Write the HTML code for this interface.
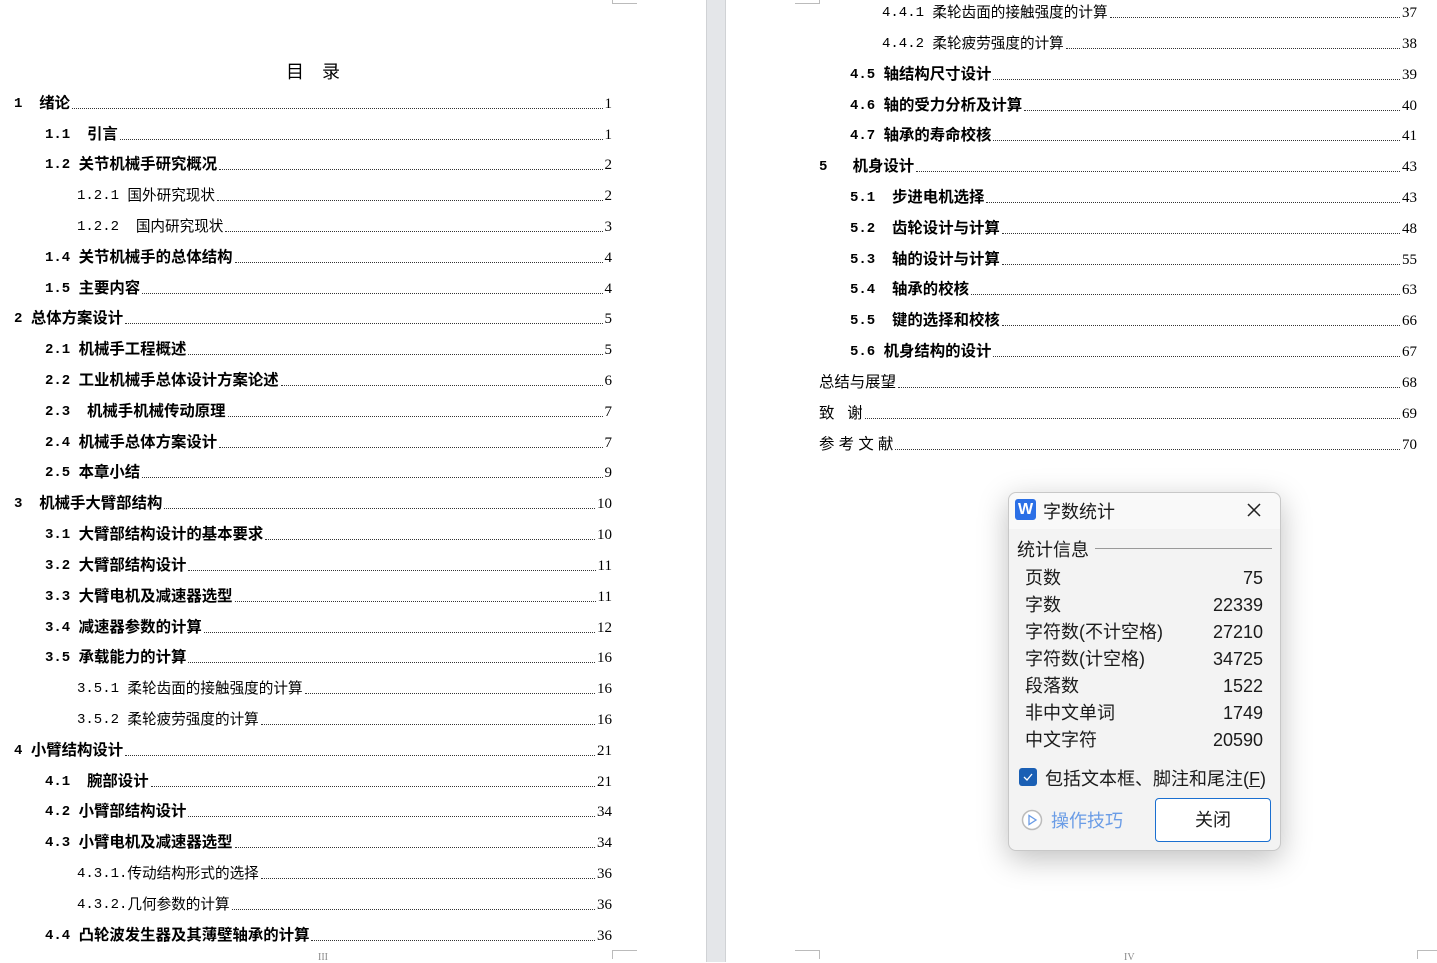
<!DOCTYPE html><html><head><meta charset="utf-8"><style>
body{margin:0;width:1437px;height:962px;overflow:hidden;background:#fff;position:relative;font-family:"Liberation Sans","Noto Sans CJK SC",sans-serif;color:#000}
.gap{position:absolute;left:706px;top:0;width:20px;height:962px;background:#e4e6e9;border-left:1px solid #d0d2d5;border-right:1px solid #d0d2d5;box-sizing:border-box}
.r{position:absolute;height:20px;display:flex;align-items:flex-end;font-size:15.4px;line-height:20px;white-space:pre}
.r.b{font-weight:bold}
.r .d{flex:1;border-bottom:1px dotted #333;margin:0 2px 5px 2px;min-width:4px}
.r .n{font-family:"Liberation Serif",serif;font-weight:normal;font-size:15px}
.r.s{font-size:14.6px}
.m{font-family:"Liberation Mono",monospace;font-size:14px}
.cm{position:absolute;border-color:#bbb;border-style:solid;width:24px;height:8px}
.dlg{position:absolute;left:1008px;top:492px;width:271px;height:357px;background:#f3f3f3;border:1px solid #c8c8c8;border-radius:8px;box-shadow:0 8px 30px rgba(0,0,0,.25);font-family:"Liberation Sans","Noto Sans CJK SC",sans-serif;font-size:18px;color:#1a1a1a}
.dlg .row{position:absolute;left:16px;width:238px;display:flex;justify-content:space-between;line-height:24px}
</style></head><body>
<div class="gap"></div>
<div class="cm" style="left:612px;top:-5px;border-width:0 0 1px 1px;width:24px"></div>
<div class="cm" style="left:795px;top:-5px;border-width:0 1px 1px 0"></div>
<div class="cm" style="left:612px;top:950px;border-width:1px 0 0 1px"></div>
<div class="cm" style="left:795px;top:950px;border-width:1px 1px 0 0"></div>
<div class="cm" style="left:1417px;top:950px;border-width:1px 0 0 1px"></div>
<div style="position:absolute;left:286px;top:58px;font-size:18px;word-spacing:0">目<span style="display:inline-block;width:18px"></span>录</div>
<div style="position:absolute;left:318px;top:952px;font-size:10px;color:#888;font-family:'Liberation Serif',serif">III</div>
<div style="position:absolute;left:1124px;top:952px;font-size:10px;color:#888;font-family:'Liberation Serif',serif">IV</div>

<div class="r b" style="left:14px;top:94px;width:598px"><span class="m">1  </span>绪论<span class="d"></span><span class="n">1</span></div>
<div class="r b" style="left:45px;top:125px;width:567px"><span class="m">1.1  </span>引言<span class="d"></span><span class="n">1</span></div>
<div class="r b" style="left:45px;top:155px;width:567px"><span class="m">1.2 </span>关节机械手研究概况<span class="d"></span><span class="n">2</span></div>
<div class="r s" style="left:77px;top:186px;width:535px"><span class="m">1.2.1 </span>国外研究现状<span class="d"></span><span class="n">2</span></div>
<div class="r s" style="left:77px;top:217px;width:535px"><span class="m">1.2.2  </span>国内研究现状<span class="d"></span><span class="n">3</span></div>
<div class="r b" style="left:45px;top:248px;width:567px"><span class="m">1.4 </span>关节机械手的总体结构<span class="d"></span><span class="n">4</span></div>
<div class="r b" style="left:45px;top:279px;width:567px"><span class="m">1.5 </span>主要内容<span class="d"></span><span class="n">4</span></div>
<div class="r b" style="left:14px;top:309px;width:598px"><span class="m">2 </span>总体方案设计<span class="d"></span><span class="n">5</span></div>
<div class="r b" style="left:45px;top:340px;width:567px"><span class="m">2.1 </span>机械手工程概述<span class="d"></span><span class="n">5</span></div>
<div class="r b" style="left:45px;top:371px;width:567px"><span class="m">2.2 </span>工业机械手总体设计方案论述<span class="d"></span><span class="n">6</span></div>
<div class="r b" style="left:45px;top:402px;width:567px"><span class="m">2.3  </span>机械手机械传动原理<span class="d"></span><span class="n">7</span></div>
<div class="r b" style="left:45px;top:433px;width:567px"><span class="m">2.4 </span>机械手总体方案设计<span class="d"></span><span class="n">7</span></div>
<div class="r b" style="left:45px;top:463px;width:567px"><span class="m">2.5 </span>本章小结<span class="d"></span><span class="n">9</span></div>
<div class="r b" style="left:14px;top:494px;width:598px"><span class="m">3  </span>机械手大臂部结构<span class="d"></span><span class="n">10</span></div>
<div class="r b" style="left:45px;top:525px;width:567px"><span class="m">3.1 </span>大臂部结构设计的基本要求<span class="d"></span><span class="n">10</span></div>
<div class="r b" style="left:45px;top:556px;width:567px"><span class="m">3.2 </span>大臂部结构设计<span class="d"></span><span class="n">11</span></div>
<div class="r b" style="left:45px;top:587px;width:567px"><span class="m">3.3 </span>大臂电机及减速器选型<span class="d"></span><span class="n">11</span></div>
<div class="r b" style="left:45px;top:618px;width:567px"><span class="m">3.4 </span>减速器参数的计算<span class="d"></span><span class="n">12</span></div>
<div class="r b" style="left:45px;top:648px;width:567px"><span class="m">3.5 </span>承载能力的计算<span class="d"></span><span class="n">16</span></div>
<div class="r s" style="left:77px;top:679px;width:535px"><span class="m">3.5.1 </span>柔轮齿面的接触强度的计算<span class="d"></span><span class="n">16</span></div>
<div class="r s" style="left:77px;top:710px;width:535px"><span class="m">3.5.2 </span>柔轮疲劳强度的计算<span class="d"></span><span class="n">16</span></div>
<div class="r b" style="left:14px;top:741px;width:598px"><span class="m">4 </span>小臂结构设计<span class="d"></span><span class="n">21</span></div>
<div class="r b" style="left:45px;top:772px;width:567px"><span class="m">4.1  </span>腕部设计<span class="d"></span><span class="n">21</span></div>
<div class="r b" style="left:45px;top:802px;width:567px"><span class="m">4.2 </span>小臂部结构设计<span class="d"></span><span class="n">34</span></div>
<div class="r b" style="left:45px;top:833px;width:567px"><span class="m">4.3 </span>小臂电机及减速器选型<span class="d"></span><span class="n">34</span></div>
<div class="r s" style="left:77px;top:864px;width:535px"><span class="m">4.3.1.</span>传动结构形式的选择<span class="d"></span><span class="n">36</span></div>
<div class="r s" style="left:77px;top:895px;width:535px"><span class="m">4.3.2.</span>几何参数的计算<span class="d"></span><span class="n">36</span></div>
<div class="r b" style="left:45px;top:926px;width:567px"><span class="m">4.4 </span>凸轮波发生器及其薄壁轴承的计算<span class="d"></span><span class="n">36</span></div>

<div class="r s" style="left:882px;top:3px;width:535px"><span class="m">4.4.1 </span>柔轮齿面的接触强度的计算<span class="d"></span><span class="n">37</span></div>
<div class="r s" style="left:882px;top:34px;width:535px"><span class="m">4.4.2 </span>柔轮疲劳强度的计算<span class="d"></span><span class="n">38</span></div>
<div class="r b" style="left:850px;top:65px;width:567px"><span class="m">4.5 </span>轴结构尺寸设计<span class="d"></span><span class="n">39</span></div>
<div class="r b" style="left:850px;top:96px;width:567px"><span class="m">4.6 </span>轴的受力分析及计算<span class="d"></span><span class="n">40</span></div>
<div class="r b" style="left:850px;top:126px;width:567px"><span class="m">4.7 </span>轴承的寿命校核<span class="d"></span><span class="n">41</span></div>
<div class="r b" style="left:819px;top:157px;width:598px"><span class="m">5   </span>机身设计<span class="d"></span><span class="n">43</span></div>
<div class="r b" style="left:850px;top:188px;width:567px"><span class="m">5.1  </span>步进电机选择<span class="d"></span><span class="n">43</span></div>
<div class="r b" style="left:850px;top:219px;width:567px"><span class="m">5.2  </span>齿轮设计与计算<span class="d"></span><span class="n">48</span></div>
<div class="r b" style="left:850px;top:250px;width:567px"><span class="m">5.3  </span>轴的设计与计算<span class="d"></span><span class="n">55</span></div>
<div class="r b" style="left:850px;top:280px;width:567px"><span class="m">5.4  </span>轴承的校核<span class="d"></span><span class="n">63</span></div>
<div class="r b" style="left:850px;top:311px;width:567px"><span class="m">5.5  </span>键的选择和校核<span class="d"></span><span class="n">66</span></div>
<div class="r b" style="left:850px;top:342px;width:567px"><span class="m">5.6 </span>机身结构的设计<span class="d"></span><span class="n">67</span></div>
<div class="r" style="left:819px;top:373px;width:598px">总结与展望<span class="d"></span><span class="n">68</span></div>
<div class="r" style="left:819px;top:404px;width:598px">致   谢<span class="d"></span><span class="n">69</span></div>
<div class="r" style="left:819px;top:435px;width:598px">参 考 文 献<span class="d"></span><span class="n">70</span></div>

<div class="dlg">
<div style="position:absolute;left:0;top:0;width:271px;height:36px;background:#f9f9f9;border-radius:8px 8px 0 0"></div>
<div style="position:absolute;left:6px;top:6px;width:21px;height:21px;background:#2b6fe6;border-radius:3px;color:#fff;font-weight:bold;font-size:16px;text-align:center;line-height:21px">W</div>
<div style="position:absolute;left:34px;top:5px">字数统计</div>
<svg style="position:absolute;left:238px;top:10px" width="14" height="14"><path d="M1 1L13 13M13 1L1 13" stroke="#222" stroke-width="1.5"/></svg>
<div style="position:absolute;left:8px;top:43px;">统计信息</div>
<div style="position:absolute;left:86px;top:55px;width:177px;height:1px;background:#999"></div>
<div class="row" style="top:73px"><span>页数</span><span>75</span></div>
<div class="row" style="top:100px"><span>字数</span><span>22339</span></div>
<div class="row" style="top:127px"><span>字符数(不计空格)</span><span>27210</span></div>
<div class="row" style="top:154px"><span>字符数(计空格)</span><span>34725</span></div>
<div class="row" style="top:181px"><span>段落数</span><span>1522</span></div>
<div class="row" style="top:208px"><span>非中文单词</span><span>1749</span></div>
<div class="row" style="top:235px"><span>中文字符</span><span>20590</span></div>
<div style="position:absolute;left:10px;top:275px;width:18px;height:18px;background:#1a5fb4;border-radius:3px"><svg width="18" height="18"><path d="M5 9l3 3 5-6" stroke="#fff" stroke-width="1.3" fill="none"/></svg></div>
<div style="position:absolute;left:36px;top:272px">包括文本框、脚注和尾注(<u>F</u>)</div>
<svg style="position:absolute;left:12px;top:316px" width="22" height="22"><circle cx="11" cy="11" r="9.5" fill="#fff" stroke="#bbb" stroke-width="1.5"/><path d="M8 6.5v9l7-4.5z" fill="none" stroke="#6a9ce6" stroke-width="1.3"/></svg>
<div style="position:absolute;left:42px;top:314px;color:#6a9ce6">操作技巧</div>
<div style="position:absolute;left:146px;top:305px;width:114px;height:42px;background:#fff;border:1px solid #1a6fd0;border-radius:4px;text-align:center;line-height:42px">关闭</div>
</div>
</body></html>
